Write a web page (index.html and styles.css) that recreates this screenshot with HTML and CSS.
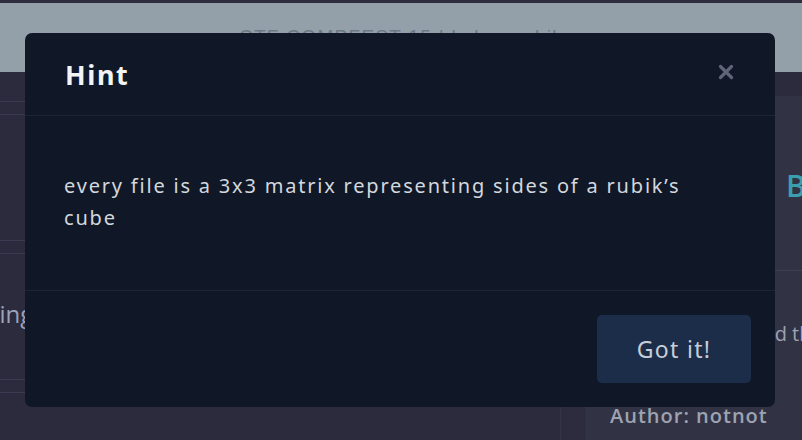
FILE: index.html
```html
<!DOCTYPE html>
<html>
<head>
<meta charset="utf-8">
<link rel="stylesheet" href="styles.css">
</head>
<body>
<header class="topbar">
  <div class="topbar-title">CTF COMPFEST 15 | kubus rubik</div>
</header>
<main class="page">
  <section class="list">
    <div class="row row-first"></div>
    <div class="row"></div>
    <div class="row"><span class="row-text">Missing</span></div>
    <div class="row"></div>
  </section>
  <div class="gutter"></div>
  <section class="card">
    <div class="card-head"><span class="card-title">Blu</span></div>
    <div class="card-body">
      <p class="card-desc">Find the flag</p>
      <p class="card-author">Author: notnot</p>
    </div>
  </section>
</main>

<div class="modal">
  <div class="modal-header">
    <h2 class="modal-title">Hint</h2>
    <button class="modal-close" aria-label="Close">
      <svg width="16" height="16" viewBox="0 0 16 16"><path d="M2.5 2.5 L13.5 13.5 M13.5 2.5 L2.5 13.5" stroke="#5f6577" stroke-width="3.2" stroke-linecap="round"/></svg>
    </button>
  </div>
  <div class="modal-body">
    <p class="hint">every file is a 3x3 matrix representing sides of a rubik’s cube</p>
  </div>
  <div class="modal-footer">
    <button class="btn">Got it!</button>
  </div>
</div>
</body>
</html>
```

FILE: styles.css
```css
* { box-sizing: border-box; }
html, body { margin: 0; padding: 0; }
body {
  width: 802px;
  height: 440px;
  overflow: hidden;
  background: #2c2b3d;
  font-family: "Liberation Sans", Arial, sans-serif;
  position: relative;
}
.topbar {
  height: 72px;
  border-top: 3px solid #2e2d3f;
  background: #939fa9;
  display: flex;
  justify-content: center;
  padding-top: 23px;
}
.topbar-title {
  color: #6c7884;
  font-size: 19px;
  letter-spacing: 1.3px;
  white-space: nowrap;
}
.page {
  display: flex;
  height: 368px;
  overflow: hidden;
}
.list {
  flex: none;
  width: 561px;
  border-right: 1px solid #34334a;
  display: flex;
  flex-direction: column;
  gap: 12px;
}
.row {
  height: 127px;
  flex: none;
  border-top: 1px solid #3a3a52;
  border-bottom: 1px solid #3a3a52;
  display: flex;
  align-items: center;
  overflow: hidden;
}
.row-first {
  height: 30px;
  border-top: 0;
}
.row-text {
  color: #9ba3b9;
  font-family: "Open Sans", sans-serif;
  font-size: 24px;
  margin-left: -51px;
  margin-top: -6px;
  white-space: nowrap;
}
.gutter {
  flex: none;
  width: 23px;
  background: #2d2c3f;
}
.card {
  flex: 1;
  min-width: 0;
  overflow: hidden;
  margin-top: 24px;
  background: #313244;
  border-left: 1px solid #2a2a3a;
}
.card-head {
  height: 175px;
  border-bottom: 1px solid #3d3e54;
  padding: 69px 0 0 201px;
}
.card-title {
  color: #3a9fae;
  font-family: "Open Sans", sans-serif;
  font-weight: 600;
  font-size: 30px;
}
.card-body {
  padding: 49px 0 0 25px;
}
.card-desc {
  margin: 0 0 0 137px;
  color: #9ea3b1;
  font-family: "Open Sans", sans-serif;
  font-size: 20px;
  white-space: nowrap;
}
.card-author {
  margin: 55px 0 0 0;
  color: #9ea3b1;
  font-family: "Open Sans", sans-serif;
  font-size: 20px;
  font-weight: 600;
  letter-spacing: 1px;
  white-space: nowrap;
}

.modal {
  position: absolute;
  left: 25px;
  top: 33px;
  width: 750px;
  height: 374px;
  background: #101827;
  border-radius: 7px;
  display: flex;
  flex-direction: column;
  font-family: "Noto Sans", sans-serif;
}
.modal-header {
  height: 83px;
  flex: none;
  border-bottom: 1px solid #1c2538;
  display: flex;
  align-items: center;
  justify-content: space-between;
  padding: 0 40px;
}
.modal-title {
  margin: 0;
  color: #f1f3f6;
  font-size: 27px;
  font-weight: 700;
  letter-spacing: 1.6px;
}
.modal-close {
  background: none;
  border: 0;
  padding: 0;
  width: 16px;
  height: 16px;
  margin-right: 1px;
  margin-top: -4px;
  display: flex;
}
.modal-body {
  height: 175px;
  flex: none;
  border-bottom: 1px solid #1c2538;
  padding: 54px 60px 0 39px;
}
.hint {
  margin: 0;
  color: #d3d7de;
  font-size: 20px;
  line-height: 32px;
  letter-spacing: 1.8px;
}
.modal-footer {
  flex: 1;
  display: flex;
  justify-content: flex-end;
  align-items: flex-start;
  padding: 24px 24px;
}
.btn {
  width: 154px;
  height: 68px;
  background: #1c2d4a;
  border: 0;
  border-radius: 5px;
  color: #c7ced8;
  font-family: "Noto Sans", sans-serif;
  font-size: 23px;
  letter-spacing: 1.3px;
}
```
